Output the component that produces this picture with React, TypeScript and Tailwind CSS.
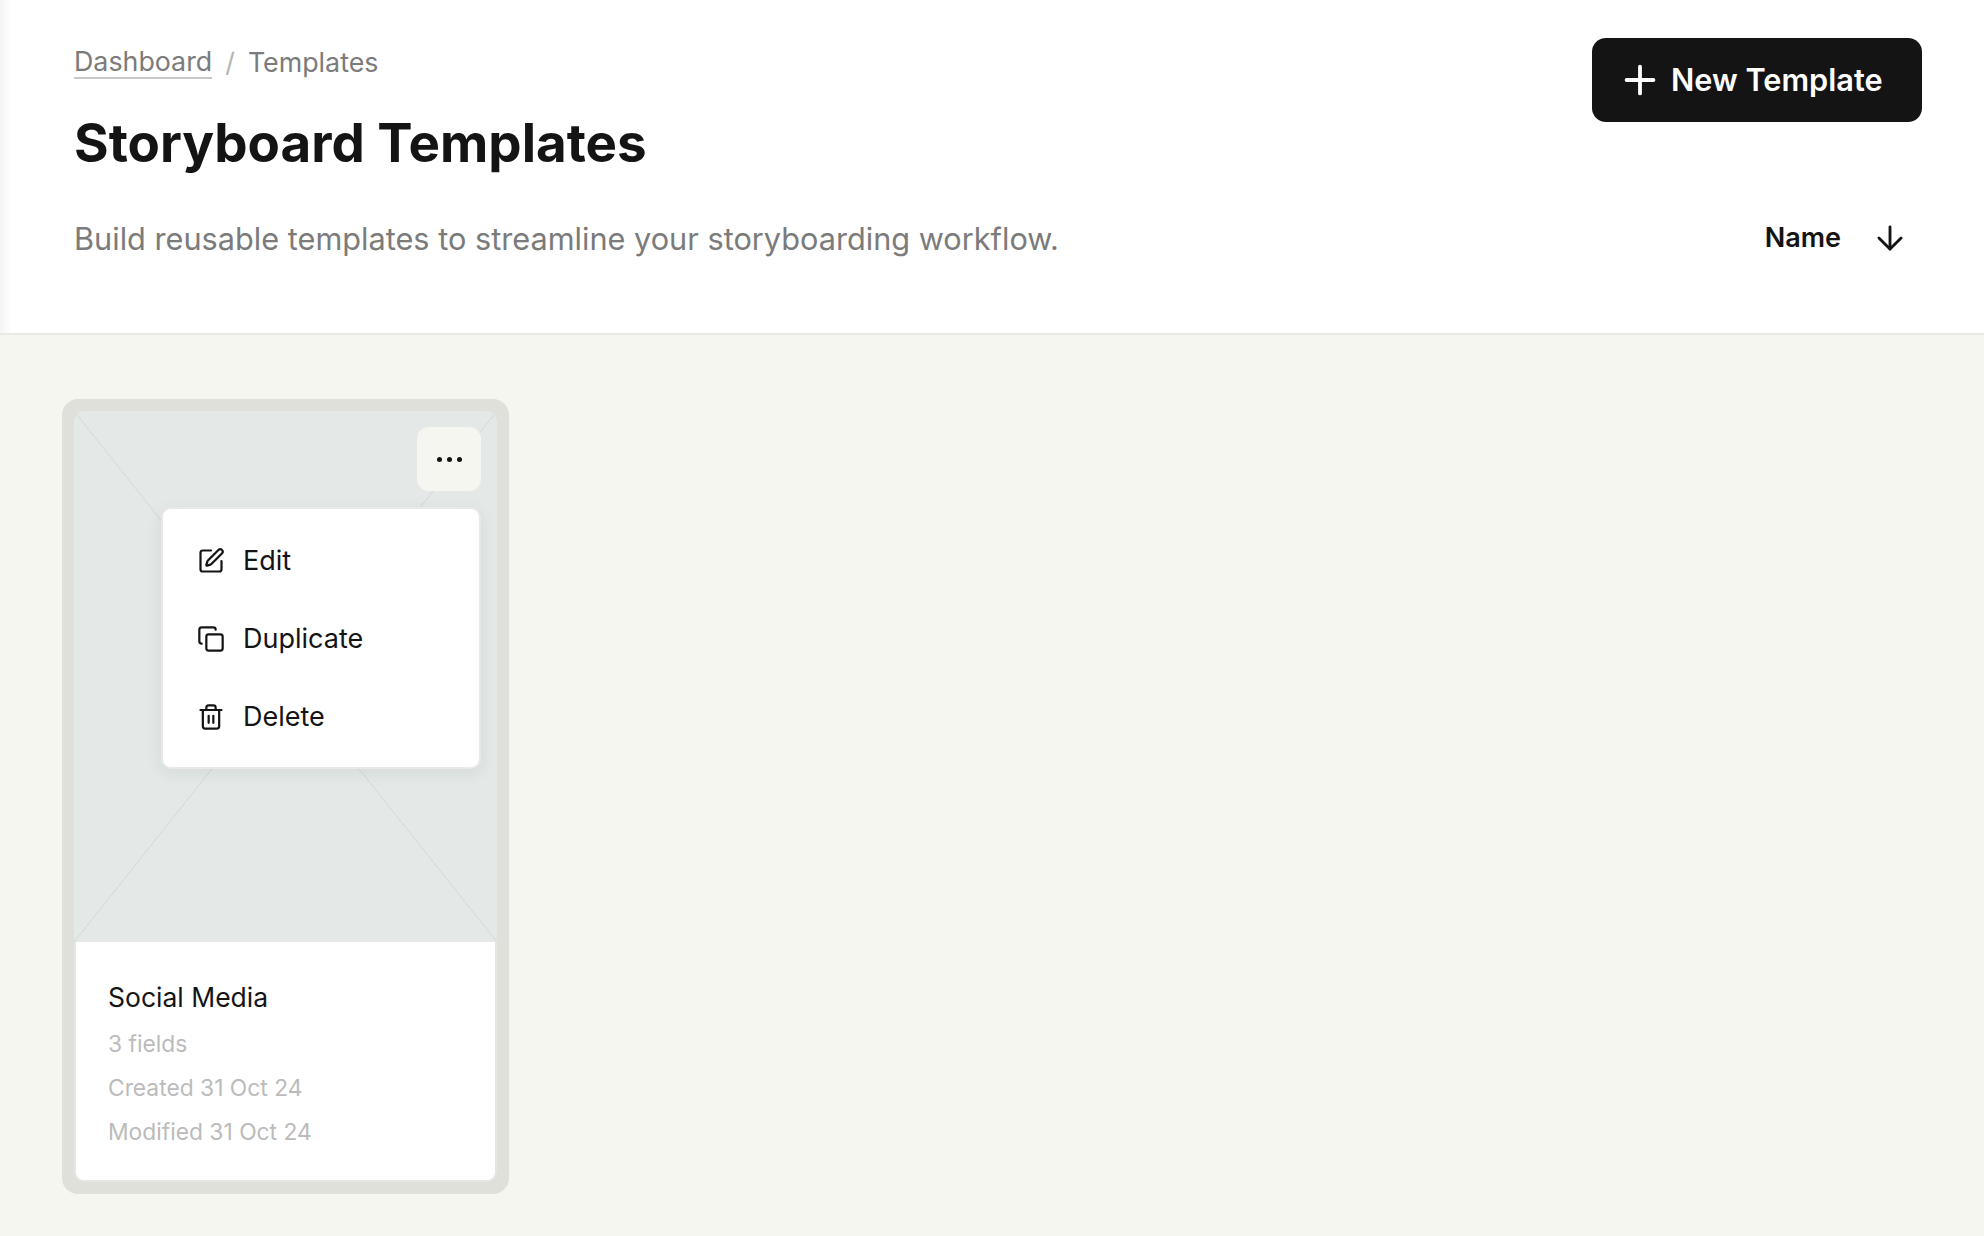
import { ArrowDown, Copy, Plus, SquarePen, Trash2 } from "lucide-react";

const menuItems = [
  { label: "Edit", icon: SquarePen },
  { label: "Duplicate", icon: Copy },
  { label: "Delete", icon: Trash2 },
];

function TemplateCard() {
  return (
    <div className="w-[447px] rounded-2xl bg-[#dfe0da] p-3">
      <div className="relative overflow-hidden rounded-[10px]">
        <div className="h-[531px] bg-[#e4e9e8]">
          <svg className="h-full w-full" viewBox="0 0 423 531" preserveAspectRatio="none">
            <path d="M0 0L423 531M423 0L0 531" stroke="#d3d8d7" strokeWidth="1" fill="none" />
          </svg>
        </div>
        <button className="absolute right-[16px] top-[16px] flex h-16 w-16 items-center justify-center gap-[5px] rounded-xl bg-[#f5f6f0]">
          <span className="h-[5px] w-[5px] rounded-full bg-[#141414]" />
          <span className="h-[5px] w-[5px] rounded-full bg-[#141414]" />
          <span className="h-[5px] w-[5px] rounded-full bg-[#141414]" />
        </button>
        <div className="absolute left-[87px] top-[96px] w-[320px] rounded-[10px] border-2 border-[#e8e9e6] bg-white pb-[11px] pt-[13px] shadow-[0_4px_16px_rgba(20,40,40,0.08)]">
          {menuItems.map(({ label, icon: Icon }) => (
            <div key={label} className="flex h-[78px] items-center gap-[18px] pl-[34px] text-[27px] text-[#141414]">
              <Icon size={28} strokeWidth={1.9} />
              <span>{label}</span>
            </div>
          ))}
        </div>
        <div className="rounded-b-[10px] border-2 border-t-0 border-[#e6e7e3] bg-white px-[32px] pb-[26px] pt-[36px]">
          <div className="text-[26.5px] leading-[38px] text-[#141414]">Social Media</div>
          <div className="mt-[6px] flex flex-col text-[22.8px] leading-[44px] text-[#bbbbbb]">
            <span>3 fields</span>
            <span>Created 31 Oct 24</span>
            <span>Modified 31 Oct 24</span>
          </div>
        </div>
      </div>
    </div>
  );
}

export default function App() {
  return (
    <main className="flex min-h-screen flex-col bg-[#f5f6f0] font-['Inter',sans-serif]">
      <header className="relative flex h-[335px] justify-between border-b-2 border-[#e9eae6] bg-white pl-[74px] pr-[62px]">
        <div className="absolute inset-y-0 left-0 w-3 bg-gradient-to-r from-[#f5f5f4] to-transparent" />
        <div className="flex flex-col">
          <nav className="mt-[44px] flex items-center text-[26.8px] leading-[36px] text-[#7b7b7b]">
            <a className="border-b-2 border-[#c8c8c4] leading-[32px]">Dashboard</a>
            <span className="mx-[13px] text-[#b5b5b5]">/</span>
            <span>Templates</span>
          </nav>
          <h1 className="mt-[29px] text-[52.9px] font-bold leading-[68px] text-[#141414]">Storyboard Templates</h1>
          <p className="mt-[41px] text-[30.7px] leading-[42px] text-[#7b7b7b]">
            Build reusable templates to streamline your storyboarding workflow.
          </p>
        </div>
        <div className="flex flex-col items-end">
          <button className="mt-[38px] flex h-[84px] w-[330px] items-center gap-[8px] rounded-[14px] bg-[#141414] pl-[25px] text-[30.7px] font-semibold text-white">
            <Plus size={46} strokeWidth={2} />
            New Template
          </button>
          <div className="mt-[96px] flex items-center gap-[30px] pr-[13px] text-[27px] font-semibold text-[#141414]">
            <span>Name</span>
            <ArrowDown size={38} strokeWidth={1.8} />
          </div>
        </div>
      </header>
      <section className="pl-[62px] pt-[64px]">
        <TemplateCard />
      </section>
    </main>
  );
}
